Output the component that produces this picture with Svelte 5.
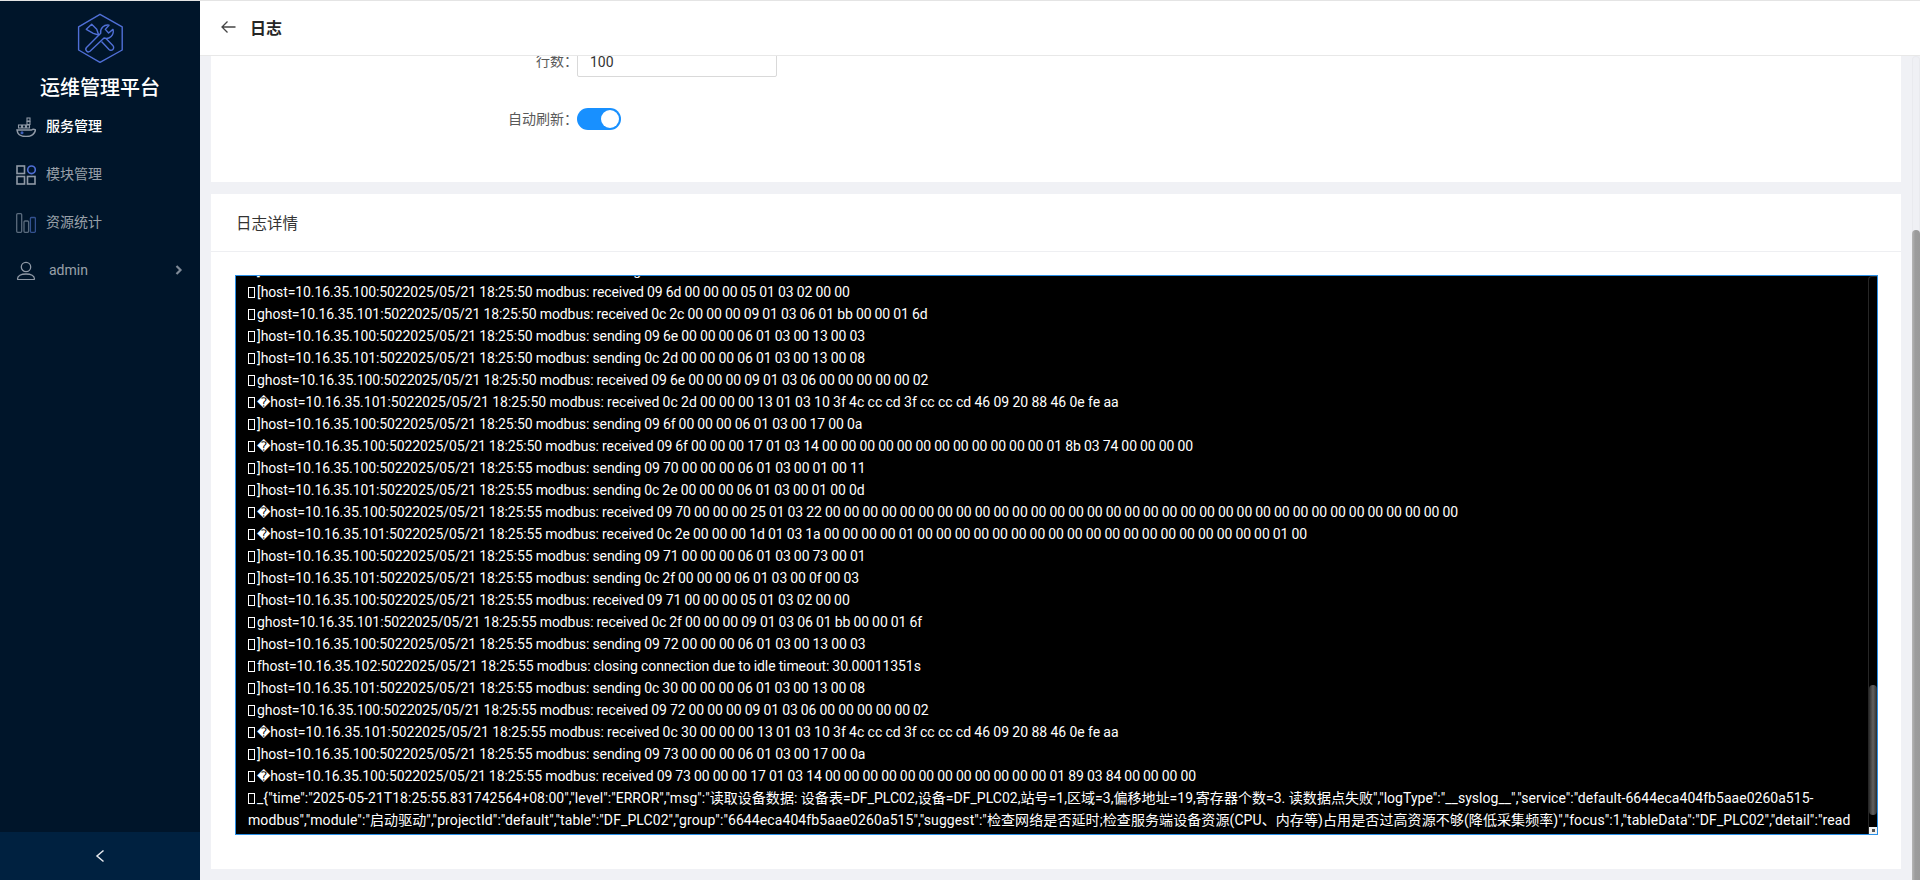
<script>
  import { onMount } from 'svelte';

  const Z = (n) => Array(n).fill('00').join(' ');
  const t50 = '2025/05/21 18:25:50 modbus: ';
  const t55 = '2025/05/21 18:25:55 modbus: ';
  const h = (n) => `host=10.16.35.${n}:502`;
  const logLines = [
    [']', h(101) + t50 + 'sending 0c 2c 00 00 00 06 01 03 00 01 00 0d'],
    ['[', h(100) + t50 + 'received 09 6d 00 00 00 05 01 03 02 00 00'],
    ['g', h(101) + t50 + 'received 0c 2c 00 00 00 09 01 03 06 01 bb 00 00 01 6d'],
    [']', h(100) + t50 + 'sending 09 6e 00 00 00 06 01 03 00 13 00 03'],
    [']', h(101) + t50 + 'sending 0c 2d 00 00 00 06 01 03 00 13 00 08'],
    ['g', h(100) + t50 + 'received 09 6e 00 00 00 09 01 03 06 00 00 00 00 00 02'],
    ['\uFFFD', h(101) + t50 + 'received 0c 2d 00 00 00 13 01 03 10 3f 4c cc cd 3f cc cc cd 46 09 20 88 46 0e fe aa', 'float-data'],
    [']', h(100) + t50 + 'sending 09 6f 00 00 00 06 01 03 00 17 00 0a'],
    ['\uFFFD', h(100) + t50 + 'received 09 6f 00 00 00 17 01 03 14 ' + Z(12) + ' 01 8b 03 74 00 00 00 00'],
    [']', h(100) + t55 + 'sending 09 70 00 00 00 06 01 03 00 01 00 11'],
    [']', h(101) + t55 + 'sending 0c 2e 00 00 00 06 01 03 00 01 00 0d'],
    ['\uFFFD', h(100) + t55 + 'received 09 70 00 00 00 25 01 03 22 ' + Z(34)],
    ['\uFFFD', h(101) + t55 + 'received 0c 2e 00 00 00 1d 01 03 1a 00 00 00 00 01 ' + Z(19) + ' 01 00'],
    [']', h(100) + t55 + 'sending 09 71 00 00 00 06 01 03 00 73 00 01'],
    [']', h(101) + t55 + 'sending 0c 2f 00 00 00 06 01 03 00 0f 00 03'],
    ['[', h(100) + t55 + 'received 09 71 00 00 00 05 01 03 02 00 00'],
    ['g', h(101) + t55 + 'received 0c 2f 00 00 00 09 01 03 06 01 bb 00 00 01 6f'],
    [']', h(100) + t55 + 'sending 09 72 00 00 00 06 01 03 00 13 00 03'],
    ['f', h(102) + t55 + 'closing connection due to idle timeout: 30.00011351s'],
    [']', h(101) + t55 + 'sending 0c 30 00 00 00 06 01 03 00 13 00 08'],
    ['g', h(100) + t55 + 'received 09 72 00 00 00 09 01 03 06 00 00 00 00 00 02'],
    ['\uFFFD', h(101) + t55 + 'received 0c 30 00 00 00 13 01 03 10 3f 4c cc cd 3f cc cc cd 46 09 20 88 46 0e fe aa', 'float-data'],
    [']', h(100) + t55 + 'sending 09 73 00 00 00 06 01 03 00 17 00 0a'],
    ['\uFFFD', h(100) + t55 + 'received 09 73 00 00 00 17 01 03 14 ' + Z(12) + ' 01 89 03 84 00 00 00 00'],
    ['_', '{"time":"2025-05-21T18:25:55.831742564+08:00","level":"ERROR","msg":"读取设备数据: 设备表=DF_PLC02,设备=DF_PLC02,站号=1,区域=3,偏移地址=19,寄存器个数=3. 读数据点失败","logType":"__syslog__","service":"default-6644eca404fb5aae0260a515-', 'json-a'],
    [null, 'modbus","module":"启动驱动","projectId":"default","table":"DF_PLC02","group":"6644eca404fb5aae0260a515","suggest":"检查网络是否延时;检查服务端设备资源(CPU、内存等)占用是否过高资源不够(降低采集频率)","focus":1,"tableData":"DF_PLC02","detail":"read', 'json-b']
  ];

  let contentEl;
  let logEl;
  onMount(() => {
    contentEl.scrollTop = contentEl.scrollHeight;
    logEl.scrollTop = logEl.scrollHeight;
  });
</script>

<div class="app">
  <aside class="sidebar">
    <div class="brand">
      <svg class="logo" width="48" height="52" viewBox="76 12 48 52" fill="none" stroke="#4f6fd6" stroke-width="1.4" stroke-linejoin="round">
        <path d="M100 14.3 122.2 26.8V50L100 62.3 78.6 50V26.8Z" />
        <path d="M86.5 47.5 100.7 33.3A7 7 0 0 1 109 25.2L105.3 29.4 108.6 33 113 29.4A7 7 0 0 1 104 38L90 51.3A2.6 2.6 0 0 1 86.5 47.5Z" />
        <path d="M86.3 29.3 91.7 24.3 96.7 29.3 98.7 35 93.3 33.3Z" />
        <path d="M106 38.5 112.8 45.5A2.6 2.6 0 0 1 109 49.5L101.5 41.5" />
      </svg>
      <h1 class="brand-name">运维管理平台</h1>
    </div>

    <nav class="nav">
      <div class="nav-item active">
        <svg width="20" height="24" viewBox="0 0 20 24" fill="none" stroke="#8f99a6" stroke-width="1.1">
          <rect x="2.5" y="12" width="3" height="3" /><rect x="6.5" y="12" width="3" height="3" /><rect x="10.5" y="12" width="3" height="3" />
          <rect x="11" y="5" width="3" height="3" /><rect x="11" y="8.5" width="3" height="3" />
          <path d="M1 17H15.5C16.5 16.2 17.5 15.8 19.5 16.8 18.7 21 15 23.5 10 23.5 5 23.5 1.5 21.5 1 17Z" stroke-width="1.5" />
          <circle cx="6" cy="19.8" r="1.5" fill="#3f5fb8" stroke="none" />
        </svg>
        <span>服务管理</span>
      </div>
      <div class="nav-item">
        <svg class="ico" width="20" height="20" viewBox="0 0 20 20" fill="none" stroke="#8f99a6" stroke-width="1.6">
          <rect x="1" y="1" width="7.5" height="7.5" /><circle cx="15.5" cy="4.8" r="3.8" stroke="#4f6fd6" />
          <rect x="1" y="11.5" width="7.5" height="7.5" /><rect x="11.5" y="11.5" width="7.5" height="7.5" />
        </svg>
        <span>模块管理</span>
      </div>
      <div class="nav-item">
        <svg class="ico" width="20" height="20" viewBox="0 0 20 20" fill="none" stroke-width="1.3">
          <rect x="0.7" y="0.7" width="5" height="18.6" rx="1" stroke="#5a6b7d" />
          <rect x="8" y="8" width="4.6" height="11.3" rx="1" stroke="#5a6b7d" />
          <rect x="14.4" y="4.5" width="5" height="14.8" rx="1" stroke="#33518f" />
        </svg>
        <span>资源统计</span>
      </div>
      <div class="nav-item user">
        <svg width="20" height="20" viewBox="0 0 20 20" fill="none" stroke="#8f99a6" stroke-width="1.3">
          <circle cx="10" cy="7" r="4.7" />
          <path d="M1.5 19C1.5 16 5 14 10 14S18.5 16 18.5 19C18.5 19.5 18 19.6 17 19.6H3C2 19.6 1.5 19.5 1.5 19Z" />
        </svg>
        <span class="user-name">admin</span>
        <svg class="caret" width="8" height="12" viewBox="0 0 8 12" fill="none" stroke="#7f8a97" stroke-width="2.2"><path d="M1.5 2 5.5 6 1.5 10" /></svg>
      </div>
    </nav>

    <div class="collapse">
      <svg width="10" height="14" viewBox="0 0 10 14" fill="none" stroke="#e6e9ed" stroke-width="1.5"><path d="M8.5 1.5 2 7 8.5 12.5" /></svg>
    </div>
  </aside>

  <main class="main">
    <header class="topbar">
      <svg width="15" height="14" viewBox="0 0 15 14" fill="none" stroke="#444" stroke-width="1.3"><path d="M14.5 7H1M6.5 1.5 1 7 6.5 12.5" /></svg>
      <span class="page-title">日志</span>
    </header>

    <div class="page">
      <div class="content" bind:this={contentEl}>
        <section class="card form-card">
          <div class="field">
            <span class="field-label">行数：</span>
            <div class="input">100</div>
          </div>
          <div class="field">
            <span class="field-label">自动刷新：</span>
            <div class="switch"><span class="knob"></span></div>
          </div>
        </section>

        <section class="card log-card">
          <div class="card-head">日志详情</div>
          <div class="card-body">
            <div class="log">
              <div class="log-text" bind:this={logEl}>
                {#each logLines as [lead, text, variant]}
                  <div class="log-line {variant ?? ''}">{#if lead !== null}<span class="tofu"></span>{/if}{#if lead === '\uFFFD'}<span class="bad">{lead}</span>{:else if lead !== null}{lead}{/if}{text}</div>
                {/each}
              </div>
              <div class="log-bar">
                <div class="log-thumb"></div>
                <div class="log-corner"><span class="grip"></span></div>
              </div>
            </div>
          </div>
        </section>
      </div>
      <div class="page-bar"><div class="page-thumb"></div></div>
    </div>
  </main>
</div>

<style>
  :global(body) {
    margin: 0;
    background: #e4e4e4;
    font-family: Roboto, "Noto Sans CJK SC", sans-serif;
  }

  .app {
    display: flex;
    height: 879px;
    padding-top: 1px;
    overflow: hidden;
  }

  .sidebar {
    width: 200px;
    flex: none;
    display: flex;
    flex-direction: column;
    background: #00152a;
    color: #fff;
  }

  .brand {
    height: 100px;
    box-sizing: border-box;
    padding-top: 11px;
    display: flex;
    flex-direction: column;
    align-items: center;
  }

  .logo { display: block; }

  .brand-name {
    margin: 9px 0 0;
    font-size: 20px;
    line-height: 28px;
    font-weight: 500;
    color: #fff;
    font-family: "Noto Sans CJK SC", sans-serif;
  }

  .nav-item {
    height: 48px;
    box-sizing: border-box;
    display: flex;
    align-items: center;
    padding-left: 16px;
    gap: 10px;
    font-size: 14px;
    color: rgba(255, 255, 255, 0.6);
  }

  .nav-item.active { color: #fff; font-weight: 500; }

  .nav-item.user { padding-top: 2px; }

  .ico { margin-top: 4px; }

  .user-name { margin-left: 3px; }

  .caret { margin-left: auto; margin-right: 17px; }

  .collapse {
    margin-top: auto;
    height: 48px;
    display: flex;
    align-items: center;
    justify-content: center;
    background: #002140;
  }

  .main {
    flex: 1;
    min-width: 0;
    display: flex;
    flex-direction: column;
    background: #f0f1f5;
  }

  .topbar {
    height: 51px;
    padding: 0 0 3px 21px;
    flex: none;
    display: flex;
    align-items: center;
    gap: 14px;
    background: #fff;
    border-bottom: 1px solid #e8e8e8;
  }

  .page-title {
    font-size: 16px;
    font-weight: 600;
    color: #262626;
  }

  .page {
    flex: 1;
    min-height: 0;
    display: flex;
  }

  .content {
    flex: 1;
    min-width: 0;
    overflow: hidden;
    padding: 11px;
    box-sizing: border-box;
  }

  .page-bar {
    width: 8px;
    flex: none;
    display: flex;
    flex-direction: column;
    justify-content: flex-end;
    background: #eff0f4;
    border-radius: 4px 4px 0 0;
    box-shadow: inset 0 0 0 1px #e9eaee;
  }

  .page-thumb {
    height: 650px;
    background: linear-gradient(90deg, #b6b6b6, #9c9c9c 40%, #9a9a9a);
    border-radius: 4px 4px 0 0;
  }

  .card { background: #fff; }

  .form-card {
    box-sizing: border-box;
    height: 335px;
    padding-top: 198px;
    margin-bottom: 12px;
  }

  .field {
    display: flex;
    align-items: center;
    height: 32px;
    margin-bottom: 26px;
    font-size: 14px;
    color: #595959;
  }

  .field-label {
    width: 367px;
    padding-bottom: 2px;
    text-align: right;
    flex: none;
    margin-right: -1px;
  }

  .input {
    width: 200px;
    height: 32px;
    box-sizing: border-box;
    padding-left: 12px;
    line-height: 32px;
    border: 1px solid #d9d9d9;
    border-radius: 2px;
    color: #333;
  }

  .switch {
    width: 44px;
    height: 22px;
    border-radius: 11px;
    background: #1890ff;
    position: relative;
  }

  .knob {
    position: absolute;
    top: 2px;
    right: 2px;
    width: 18px;
    height: 18px;
    border-radius: 50%;
    background: #fff;
  }

  .card-head {
    height: 55px;
    padding: 2px 0 0 25px;
    line-height: 57px;
    font-size: 15.5px;
    color: #333;
    border-bottom: 1px solid #eeeff2;
  }

  .card-body {
    padding: 23px 23px 34px 24px;
  }

  .log {
    height: 560px;
    box-sizing: border-box;
    display: flex;
    border: 1px solid #2a8fe6;
    background: #000;
    color: #fff;
    font-size: 14px;
    line-height: 22px;
  }

  .log-text {
    flex: 1;
    min-width: 0;
    overflow: hidden;
    padding: 0 0 3px 12px;
  }

  .log-bar {
    width: 9px;
    flex: none;
    display: flex;
    flex-direction: column;
    justify-content: flex-end;
    box-sizing: border-box;
    border-left: 1px solid #262626;
    border-top: 1px solid #262626;
    border-top-left-radius: 4px;
  }

  .log-thumb {
    height: 130px;
    margin-bottom: 12px;
    background: linear-gradient(90deg, #2c2c2c, #616161 50%, #2c2c2c);
    border-radius: 4px;
  }

  .log-corner {
    height: 7px;
    display: flex;
    align-items: center;
    justify-content: center;
    background: #f2f2f2;
  }

  .grip {
    width: 3px;
    height: 3px;
    background: #555;
  }

  .log-line {
    height: 22px;
    white-space: nowrap;
    letter-spacing: -0.1px;
    word-spacing: -0.2px;
  }

  .log-line.float-data { letter-spacing: 0; }
  .log-line.json-a { letter-spacing: 0.03px; word-spacing: 0; }
  .log-line.json-b { letter-spacing: 0.09px; word-spacing: 0; }

  .tofu {
    display: inline-block;
    box-sizing: border-box;
    width: 7px;
    height: 11px;
    margin-right: 2px;
    border: 1px solid #fff;
    vertical-align: -1px;
  }

  .bad { font-family: "DejaVu Sans", sans-serif; font-size: 13px; }
</style>
